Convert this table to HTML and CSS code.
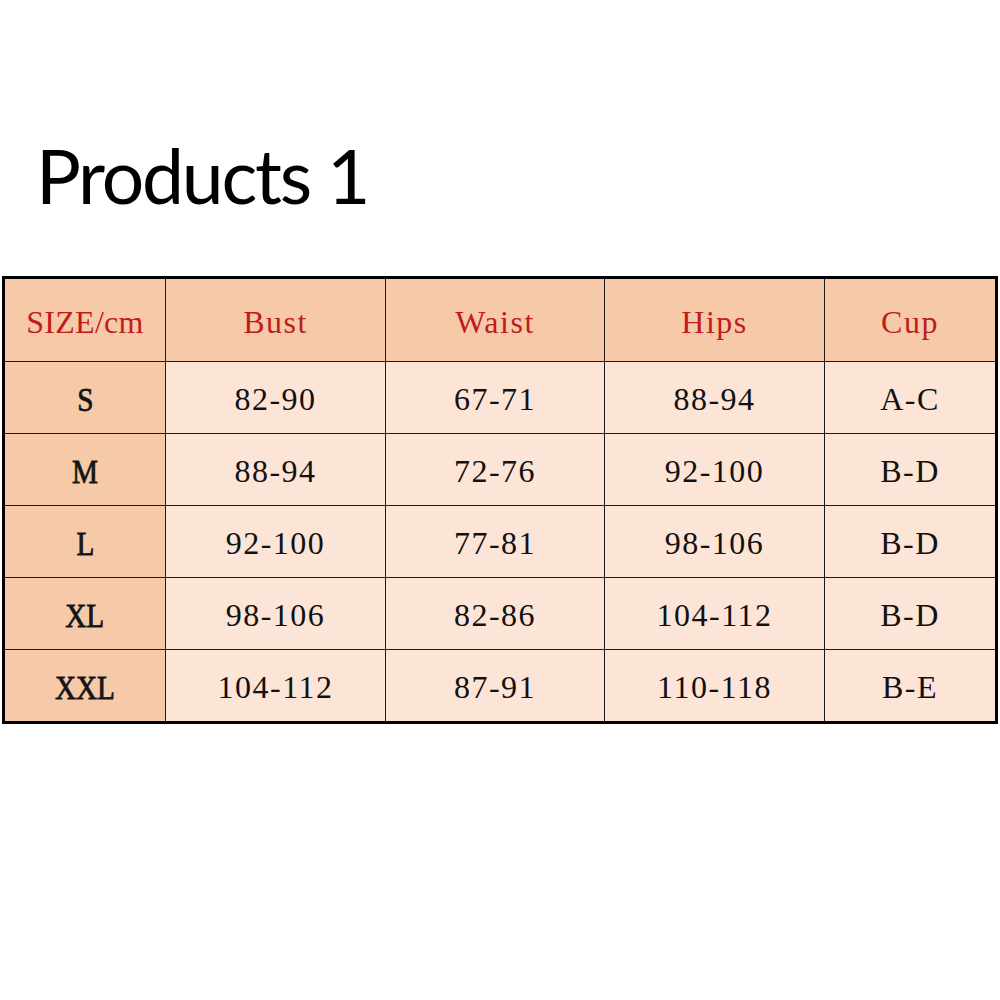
FILE: index.html
```html
<!DOCTYPE html>
<html>
<head>
<meta charset="utf-8">
<link rel="stylesheet" href="styles.css">
</head>
<body>
<h1 class="title">Products 1</h1>
<table class="size-table">
  <colgroup>
    <col class="c1"><col class="c2"><col class="c3"><col class="c4"><col class="c5">
  </colgroup>
  <thead>
    <tr><th class="first">SIZE/cm</th><th>Bust</th><th>Waist</th><th>Hips</th><th>Cup</th></tr>
  </thead>
  <tbody>
    <tr><td class="size"><span>S</span></td><td>82-90</td><td>67-71</td><td>88-94</td><td>A-C</td></tr>
    <tr><td class="size"><span>M</span></td><td>88-94</td><td>72-76</td><td>92-100</td><td>B-D</td></tr>
    <tr><td class="size"><span>L</span></td><td>92-100</td><td>77-81</td><td>98-106</td><td>B-D</td></tr>
    <tr><td class="size"><span>XL</span></td><td>98-106</td><td>82-86</td><td>104-112</td><td>B-D</td></tr>
    <tr><td class="size"><span>XXL</span></td><td>104-112</td><td>87-91</td><td>110-118</td><td>B-E</td></tr>
  </tbody>
</table>
</body>
</html>
```
FILE: styles.css
```css
html, body {
  margin: 0;
  padding: 0;
  background: #ffffff;
}
.title {
  margin: 0;
  padding: 138px 0 0 36px;
  height: 276px;
  box-sizing: border-box;
  font-family: "Lato", "Liberation Sans", sans-serif;
  font-weight: 400;
  font-size: 75px;
  line-height: 1;
  letter-spacing: -2.2px;
  color: #000;
}
.size-table {
  margin-left: 2px;
  width: 996px;
  border-collapse: collapse;
  border: 3px solid #000;
  table-layout: fixed;
  font-family: "Liberation Serif", "Times New Roman", serif;
  font-size: 32px;
}
.c1 { width: 162px; }
.c2 { width: 220px; }
.c3 { width: 219px; }
.c4 { width: 220px; }
.c5 { width: 172px; }
.size-table th,
.size-table td {
  border: 1px solid #1a1a1a;
  text-align: center;
  vertical-align: middle;
  padding: 4px 0 0 0;
  letter-spacing: 1.5px;
}
.size-table th {
  height: 78px;
  background: #f6c9a8;
  color: #c01c1c;
  font-weight: 400;
}
.size-table th.first {
  letter-spacing: 0.3px;
}
.size-table td {
  height: 67px;
  background: #fce4d6;
  color: #111;
}
.size-table td.size {
  background: #f6c9a9;
}
.size-table td.size span {
  display: inline-block;
  font-size: 34px;
  font-weight: 400;
  letter-spacing: 0;
  transform: scaleX(0.86);
  -webkit-text-stroke: 0.8px #151515;
  color: #151515;
}
```
